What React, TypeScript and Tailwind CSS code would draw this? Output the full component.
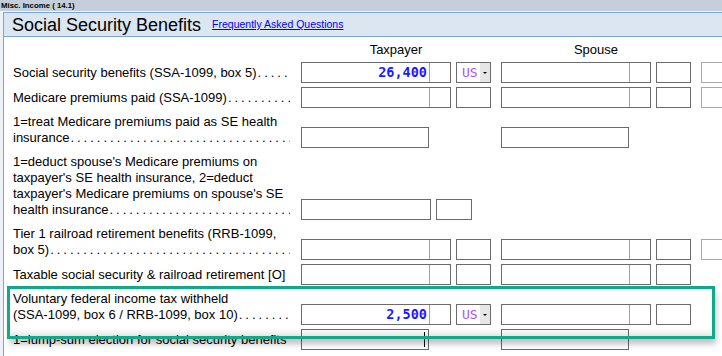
import React from "react";

const DARK = "border-[#6b6b6b]";

function MainBox({
  value,
  small = true,
  cursor = false,
  wide = false,
}: {
  value?: string;
  small?: boolean;
  cursor?: boolean;
  wide?: boolean;
}) {
  return (
    <div
      className={`h-[21px] shrink-0 border ${DARK} flex bg-white ${
        small ? "w-[150px]" : wide ? "w-[130px]" : "w-[128px]"
      }`}
    >
      <div
        className={`relative h-full flex items-center justify-end pr-[2px] ${
          small ? "w-[128px] border-r border-[#a3a3a3]" : "flex-1"
        }`}
      >
        {value && (
          <span className="font-['DejaVu_Sans_Mono','Liberation_Mono',monospace] font-bold text-[13.5px] leading-none text-[#1a1aff]">
            {value}
          </span>
        )}
        {cursor && <span className="absolute right-[3px] top-[2px] w-px h-[15px] bg-black" />}
      </div>
      {small && <div className="flex-1" />}
    </div>
  );
}

function SmallBox({ us = false, w36 = false }: { us?: boolean; w36?: boolean }) {
  return (
    <div
      className={`ml-[5px] h-[21px] shrink-0 border ${DARK} bg-white flex items-stretch ${
        w36 ? "w-[36px]" : "w-[35px]"
      }`}
    >
      {us && (
        <>
          <span className="pl-[5px] flex items-center font-['DejaVu_Sans_Mono','Liberation_Mono',monospace] text-[13px] leading-none text-[#a757f2]">
            US
          </span>
          <span className="ml-auto w-[10px] bg-[#e6e6e6] flex items-center justify-center">
            <span className="w-0 h-0 border-l-[2px] border-r-[2px] border-t-[2px] border-l-transparent border-r-transparent border-t-black" />
          </span>
        </>
      )}
    </div>
  );
}

function LightBox() {
  return <div className="ml-[10px] h-[21px] w-[40px] shrink-0 border border-[#a8a8a8] bg-white" />;
}

function Dots() {
  return (
    <span className="flex-1 min-w-0 overflow-hidden whitespace-nowrap tracking-[3px] ml-[1px]">
      {".".repeat(70)}
    </span>
  );
}

function Label({ lines, dots = true }: { lines: string[]; dots?: boolean }) {
  const last = lines[lines.length - 1];
  return (
    <div className="w-[288px] shrink-0 pl-[9px] pr-[2px] pb-[2px] text-[13px] leading-[16px]">
      {lines.slice(0, -1).map((l, i) => (
        <div key={i} className="whitespace-nowrap">
          {l}
        </div>
      ))}
      <div className="flex whitespace-nowrap">
        <span>{last}</span>
        {dots && <Dots />}
      </div>
    </div>
  );
}

function Row({ children, mt }: { children: React.ReactNode; mt: string }) {
  return <div className={`flex items-end ${mt}`}>{children}</div>;
}

function Fields({ children }: { children: React.ReactNode }) {
  return <div className="ml-[9px] flex items-center">{children}</div>;
}

export default function App() {
  return (
    <div className="relative w-[722px] h-[356px] overflow-hidden bg-white text-black font-['Liberation_Sans',Arial,sans-serif]">
      <div className="h-[11px] bg-[#c4cfdb] pl-[1px] text-[7.8px] font-bold leading-[11px] whitespace-nowrap">
        Misc. Income ( 14.1)
      </div>
      <div className="h-[1px] bg-[#f2f5f8]" />
      <div className="flex h-[344px]">
        <div className="w-[3px] shrink-0 bg-[#eef1f5]" />
        <div className="flex-1 min-w-0 border-l border-[#7ba7d7] flex flex-col">
          <div className="h-[25px] shrink-0 bg-[#dce6f1] border-t border-b border-[#7ba7d7] flex items-center pl-[8px]">
            <span className="text-[18px] leading-none whitespace-nowrap">Social Security Benefits</span>
            <a
              href="#"
              className="ml-[11px] text-[10.5px] leading-none text-[#0000ee] underline whitespace-nowrap"
            >
              Frequently Asked Questions
            </a>
          </div>

          <div className="pt-[5px] flex flex-col">
            <div className="flex text-[13px] leading-[16px]">
              <div className="w-[288px] shrink-0" />
              <div className="ml-[9px] w-[190px] text-center">Taxpayer</div>
              <div className="ml-[10px] w-[190px] text-center">Spouse</div>
            </div>

            <Row mt="mt-[4px]">
              <Label lines={["Social security benefits (SSA-1099, box 5)"]} />
              <Fields>
                <MainBox value="26,400" />
                <SmallBox us />
                <div className="ml-[10px]">
                  <MainBox />
                </div>
                <SmallBox />
                <LightBox />
              </Fields>
            </Row>

            <Row mt="mt-[4px]">
              <Label lines={["Medicare premiums paid (SSA-1099)"]} />
              <Fields>
                <MainBox />
                <SmallBox />
                <div className="ml-[10px]">
                  <MainBox />
                </div>
                <SmallBox />
                <LightBox />
              </Fields>
            </Row>

            <Row mt="mt-[6px]">
              <Label lines={["1=treat Medicare premiums paid as SE health", "insurance"]} />
              <Fields>
                <MainBox small={false} />
                <div className="ml-[72px]">
                  <MainBox small={false} />
                </div>
              </Fields>
            </Row>

            <Row mt="mt-[6px]">
              <Label
                lines={[
                  "1=deduct spouse's Medicare premiums on",
                  "taxpayer's SE health insurance, 2=deduct",
                  "taxpayer's Medicare premiums on spouse's SE",
                  "health insurance ",
                ]}
              />
              <Fields>
                <MainBox small={false} wide />
                <SmallBox w36 />
              </Fields>
            </Row>

            <Row mt="mt-[6px]">
              <Label lines={["Tier 1 railroad retirement benefits (RRB-1099,", "box 5)"]} />
              <Fields>
                <MainBox />
                <SmallBox />
                <div className="ml-[10px]">
                  <MainBox />
                </div>
                <SmallBox />
                <LightBox />
              </Fields>
            </Row>

            <Row mt="mt-[4px]">
              <Label lines={["Taxable social security & railroad retirement [O]"]} dots={false} />
              <Fields>
                <MainBox />
                <SmallBox />
                <div className="ml-[10px]">
                  <MainBox />
                </div>
                <SmallBox />
              </Fields>
            </Row>

            <Row mt="mt-[6px]">
              <Label
                lines={["Voluntary federal income tax withheld", "(SSA-1099, box 6 / RRB-1099, box 10)"]}
              />
              <Fields>
                <MainBox value="2,500" />
                <SmallBox us />
                <div className="ml-[10px]">
                  <MainBox />
                </div>
                <SmallBox />
              </Fields>
            </Row>

            <Row mt="mt-[4px]">
              <Label lines={["1=lump-sum election for social security benefits"]} dots={false} />
              <Fields>
                <MainBox small={false} cursor />
                <div className="ml-[72px]">
                  <MainBox small={false} />
                </div>
              </Fields>
            </Row>
          </div>
        </div>
      </div>

      <div className="pointer-events-none absolute left-[7px] top-[286px] w-[708px] h-[53px] border-[3px] border-[#14a88a] shadow-[2px_6px_6px_-1px_rgba(0,0,0,0.25),inset_0_-7px_6px_-4px_rgba(0,0,0,0.12)]" />
    </div>
  );
}
